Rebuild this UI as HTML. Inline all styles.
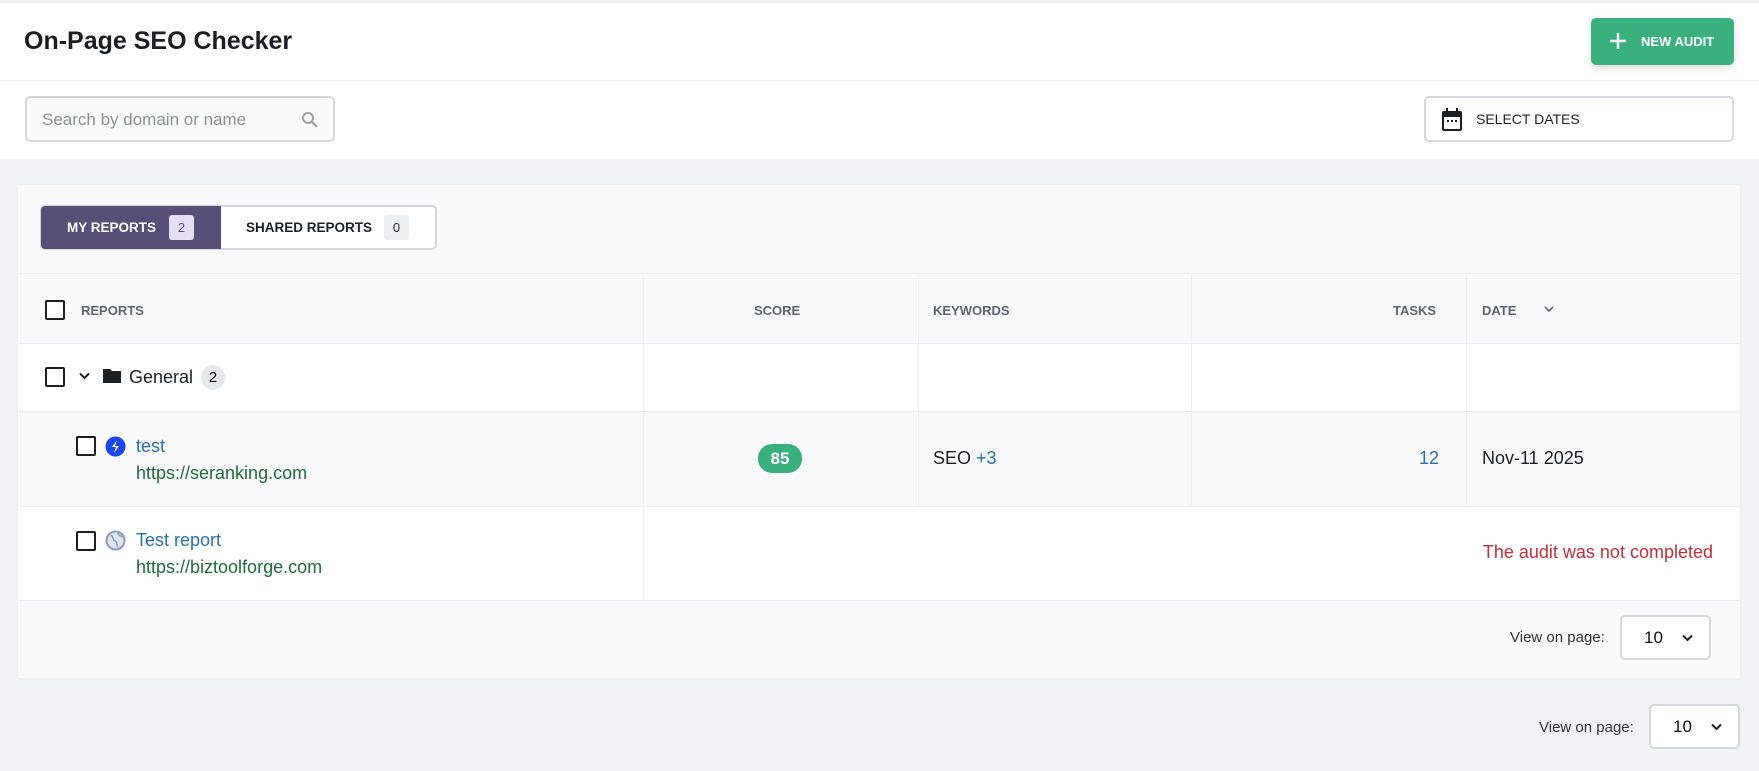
<!DOCTYPE html>
<html><head><meta charset="utf-8"><style>
*{box-sizing:border-box;margin:0;padding:0}
body{width:1759px;height:771px;overflow:hidden;background:#f2f3f6;font-family:"Liberation Sans",sans-serif;color:#111;position:relative}
.abs{position:absolute}
.top{left:0;top:0;width:1759px;height:159px;background:#fff;border-top:3px solid #eef0f3}
.hline{left:0;top:80px;width:1759px;height:1px;background:#eceef2}
.title{left:24px;top:27px;font-size:25px;font-weight:bold;color:#1a1d24}
.btn{left:1591px;top:18px;width:143px;height:47px;background:#3bb07f;border-radius:5px;color:#fff;font-size:13px;font-weight:bold;box-shadow:0 3px 8px rgba(0,0,0,.15)}
.box{border:2px solid #d5d7dc;border-radius:5px;background:#fafafb}
.card{left:18px;top:185px;width:1722px;height:493px;background:#f9f9fb;box-shadow:0 1px 3px rgba(0,0,0,.05)}
.chk{width:20px;height:20px;border:2px solid #1d1f24;border-radius:2px;background:#fff}
.th{font-size:13px;font-weight:bold;color:#5a6573}
.vl{width:1px;background:#eceef2}
.link{color:#2a6fb0;font-size:18px}
.url{color:#1f6b3a;font-size:18px}
.sel{background:#fff;border:2px solid #d5d7dc;border-radius:5px;font-size:17px}
</style></head><body>
<div class="abs top"></div>
<div class="abs hline"></div>
<div class="abs title">On-Page SEO Checker</div>
<div class="abs btn"><svg class="abs" style="left:18px;top:14px" width="18" height="18"><path d="M9 1v16M1 9h16" stroke="#fff" stroke-width="2.4"/></svg><span class="abs" style="left:50px;top:16px">NEW AUDIT</span></div>
<div class="abs box" style="left:25px;top:96px;width:310px;height:46px"><span class="abs" style="left:15px;top:12px;font-size:17px;color:#8a8f98">Search by domain or name</span>
<svg class="abs" style="left:274px;top:13px" width="18" height="18"><circle cx="7" cy="7" r="5" fill="none" stroke="#9aa0a8" stroke-width="2"/><path d="M11 11l5 5" stroke="#9aa0a8" stroke-width="2.2"/></svg></div>
<div class="abs box" style="left:1424px;top:96px;width:310px;height:46px;background:#fff"><svg class="abs" style="left:14px;top:9px" width="24" height="26"><rect x="2" y="4" width="20" height="20" rx="2" fill="#1d1f24"/><rect x="4" y="10" width="16" height="12" fill="#fff"/><rect x="6" y="1" width="2" height="5" fill="#1d1f24"/><rect x="16" y="1" width="2" height="5" fill="#1d1f24"/><rect x="7" y="13" width="2" height="2" fill="#1d1f24"/><rect x="11" y="13" width="2" height="2" fill="#1d1f24"/><rect x="15" y="13" width="2" height="2" fill="#1d1f24"/></svg><span class="abs" style="left:50px;top:13px;font-size:14px;color:#1d1f24">SELECT DATES</span></div>

<div class="abs card"></div>
<div class="abs" style="left:40px;top:205px;width:397px;height:45px;border:2px solid #d5d7dc;border-radius:5px;background:#fff"></div>
<div class="abs" style="left:41px;top:206px;width:180px;height:43px;background:#574f78;border-radius:4px 0 0 4px"></div>
<span class="abs" style="left:67px;top:220px;font-size:13.5px;font-weight:bold;color:#fff">MY REPORTS</span>
<span class="abs" style="left:169px;top:215px;width:25px;height:25px;background:#e6dcf4;border-radius:3px;font-size:13px;text-align:center;line-height:25px;color:#574f78">2</span>
<span class="abs" style="left:246px;top:220px;font-size:13.5px;font-weight:bold;color:#1d1f24">SHARED REPORTS</span>
<span class="abs" style="left:384px;top:215px;width:25px;height:25px;background:#eceef2;border-radius:3px;font-size:13px;text-align:center;line-height:25px;color:#333">0</span>

<div class="abs" style="left:18px;top:273px;width:1722px;height:1px;background:#eceef2"></div>
<div class="abs" style="left:18px;top:343px;width:1722px;height:68px;background:#fff"></div>
<div class="abs" style="left:18px;top:411px;width:1722px;height:1px;background:#eceef2"></div>
<div class="abs" style="left:18px;top:506px;width:1722px;height:94px;background:#fff"></div>
<div class="abs" style="left:18px;top:506px;width:1722px;height:1px;background:#eceef2"></div>
<div class="abs" style="left:18px;top:343px;width:1722px;height:1px;background:#eceef2"></div>
<div class="abs" style="left:18px;top:600px;width:1722px;height:1px;background:#eceef2"></div>
<div class="abs vl" style="left:643px;top:274px;height:326px"></div>
<div class="abs vl" style="left:918px;top:274px;height:232px"></div>
<div class="abs vl" style="left:1191px;top:274px;height:232px"></div>
<div class="abs vl" style="left:1466px;top:274px;height:232px"></div>

<div class="abs chk" style="left:45px;top:300px"></div>
<span class="abs th" style="left:81px;top:303px">REPORTS</span>
<span class="abs th" style="left:754px;top:303px">SCORE</span>
<span class="abs th" style="left:933px;top:303px">KEYWORDS</span>
<span class="abs th" style="left:1393px;top:303px">TASKS</span>
<span class="abs th" style="left:1482px;top:303px">DATE</span>
<svg class="abs" style="left:1544px;top:305px" width="10" height="8"><path d="M1 2l4 4 4-4" fill="none" stroke="#5a6573" stroke-width="1.6"/></svg>

<div class="abs chk" style="left:45px;top:367px"></div>
<svg class="abs" style="left:79px;top:372px" width="11" height="8"><path d="M1 1.5l4.5 4.5 4.5-4.5" fill="none" stroke="#1d1f24" stroke-width="2"/></svg>
<svg class="abs" style="left:103px;top:368px" width="18" height="15"><path d="M0 1h7l2 2h9v12H0z" fill="#1d1f24"/></svg>
<span class="abs" style="left:129px;top:367px;font-size:18px;color:#1d1f24">General</span>
<span class="abs" style="left:201px;top:365px;width:24px;height:25px;background:#e6e8ec;border-radius:12px;font-size:15px;text-align:center;line-height:25px">2</span>

<div class="abs chk" style="left:76px;top:436px"></div>
<svg class="abs" style="left:105px;top:436px" width="21" height="21"><circle cx="10.5" cy="10.5" r="10" fill="#1a47e8"/><path d="M12 4l-5 7h4l-2 6 5-7h-4z" fill="#fff"/></svg>
<span class="abs link" style="left:136px;top:436px">test</span>
<span class="abs url" style="left:136px;top:463px">https://seranking.com</span>
<span class="abs" style="left:758px;top:444px;width:44px;height:29px;background:#3bb07f;border-radius:14px;color:#fff;font-size:17px;font-weight:bold;text-align:center;line-height:29px">85</span>
<span class="abs" style="left:933px;top:448px;font-size:18px;color:#1d1f24">SEO <span style="color:#2a6fb0">+3</span></span>
<span class="abs" style="left:1419px;top:448px;font-size:18px;color:#2a6fb0">12</span>
<span class="abs" style="left:1482px;top:448px;font-size:18px;color:#1d1f24">Nov-11 2025</span>

<div class="abs chk" style="left:76px;top:531px"></div>
<svg class="abs" style="left:105px;top:530px" width="21" height="21"><circle cx="10.5" cy="10.5" r="9" fill="#dfe3ee" stroke="#8d97c2" stroke-width="2"/><path d="M6 5c3 2 1 5 4 6s1 5 3 6M13 3c0 3 3 3 5 4" fill="none" stroke="#8d97c2" stroke-width="1.4"/></svg>
<span class="abs link" style="left:136px;top:530px">Test report</span>
<span class="abs url" style="left:136px;top:557px">https://biztoolforge.com</span>
<span class="abs" style="right:46px;top:542px;font-size:18px;color:#c0303a">The audit was not completed</span>

<span class="abs" style="left:1510px;top:629px;font-size:15px;color:#333">View on page:</span>
<div class="abs sel" style="left:1620px;top:615px;width:91px;height:45px"><span class="abs" style="left:22px;top:11px">10</span><svg class="abs" style="left:60px;top:17px" width="11" height="8"><path d="M1 1.5l4.5 4.5 4.5-4.5" fill="none" stroke="#1d1f24" stroke-width="2"/></svg></div>
<span class="abs" style="left:1539px;top:719px;font-size:15px;color:#333">View on page:</span>
<div class="abs sel" style="left:1649px;top:704px;width:91px;height:45px"><span class="abs" style="left:22px;top:11px">10</span><svg class="abs" style="left:60px;top:17px" width="11" height="8"><path d="M1 1.5l4.5 4.5 4.5-4.5" fill="none" stroke="#1d1f24" stroke-width="2"/></svg></div>
</body></html>
